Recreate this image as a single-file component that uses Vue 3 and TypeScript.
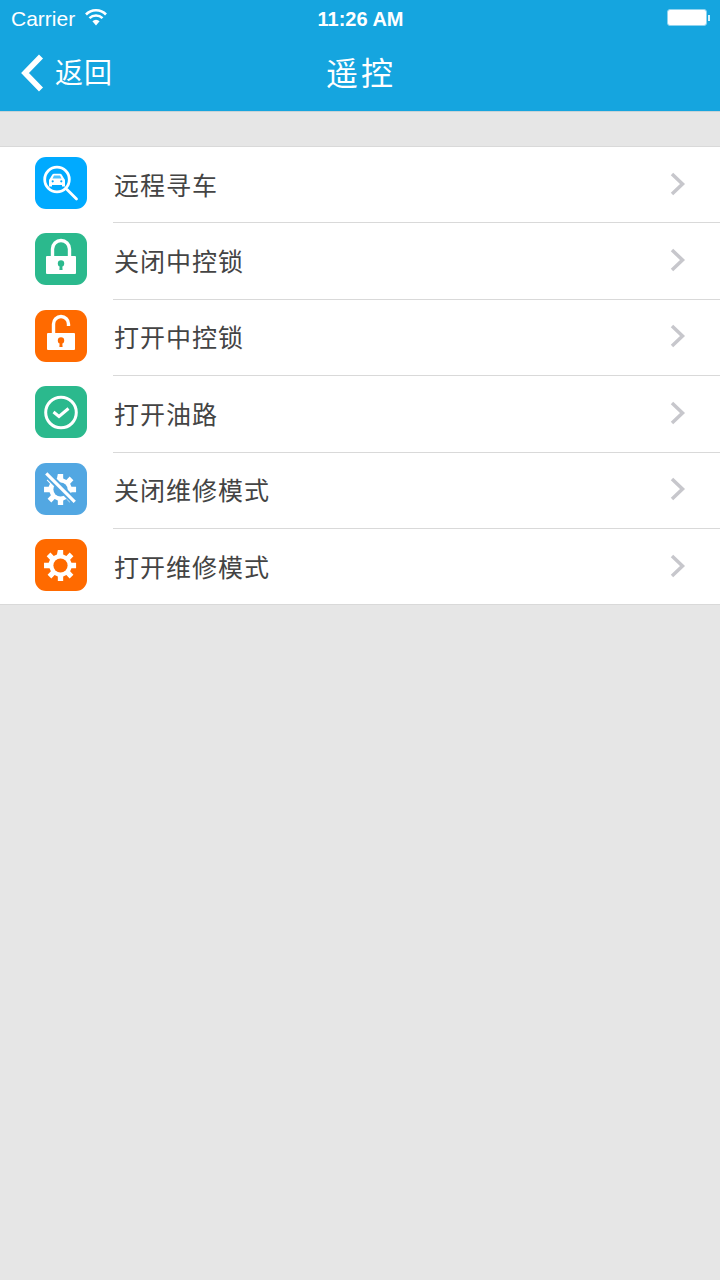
<script setup lang="ts">
interface RemoteItem {
  label: string;
  color: string;
  icon: 'search' | 'lock' | 'unlock' | 'check' | 'gearOff' | 'gear';
}

const items: RemoteItem[] = [
  { label: '远程寻车', color: '#00aaff', icon: 'search' },
  { label: '关闭中控锁', color: '#2bb98d', icon: 'lock' },
  { label: '打开中控锁', color: '#ff6a00', icon: 'unlock' },
  { label: '打开油路', color: '#2bb98d', icon: 'check' },
  { label: '关闭维修模式', color: '#52a7e2', icon: 'gearOff' },
  { label: '打开维修模式', color: '#ff6a00', icon: 'gear' },
];

const gearPath =
  'M23 8.5h6v5.2l3.6 1.5 3.7-3.7 4.2 4.2-3.7 3.7 1.5 3.6h5.2v6h-5.2l-1.5 3.6 3.7 3.7-4.2 4.2-3.7-3.700-3.600 1.500v5.200h-6v-5.200l-3.600-1.500-3.700 3.700-4.200-4.200 3.700-3.700-1.500-3.600H7.500v-6h5.200l1.500-3.600-3.700-3.700 4.200-4.200 3.700 3.700 3.600-1.500z';
</script>

<template>
  <div class="page">
    <header class="top">
      <div class="status">
        <div class="status-left">
          <span class="carrier">Carrier</span>
          <svg class="wifi" width="22" height="17" viewBox="0 0 22 17">
            <path d="M1 5.500a14 14 0 0 1 20 0" fill="none" stroke="#fff" stroke-width="2.600" />
            <path d="M4.500 9.200a9.200 9.200 0 0 1 13 0" fill="none" stroke="#fff" stroke-width="2.600" />
            <path d="M11 16.500L7.400 12.300a5 5 0 0 1 7.200 0z" fill="#fff" />
          </svg>
        </div>
        <span class="time">11:26 AM</span>
        <div class="battery">
          <div class="battery-body"></div>
          <div class="battery-cap"></div>
        </div>
      </div>
      <nav class="nav">
        <div class="back">
          <svg class="back-arrow" width="24" height="38" viewBox="0 0 24 38">
            <path d="M21 2.500L5 19l16 16.500" fill="none" stroke="#fff" stroke-width="5.600" />
          </svg>
          <span class="back-text">返回</span>
        </div>
        <div class="title">遥控</div>
      </nav>
    </header>

    <ul class="list">
      <li v-for="item in items" :key="item.label" class="row">
        <span class="icon" :style="{ background: item.color }">
          <svg width="52" height="52" viewBox="0 0 52 52">
            <template v-if="item.icon === 'search'">
              <circle cx="22" cy="22.500" r="12.300" fill="none" stroke="#fff" stroke-width="2.800" />
              <path d="M32 32.500l9.500 9.500" stroke="#fff" stroke-width="2.800" stroke-linecap="round" />
              <path
                d="M15 21.500l2.200-3.700c.4-.7 1-1 1.700-1h6.200c.7 0 1.300.3 1.700 1l2.200 3.700c.7.500 1 1.200 1 2v6h-3V28H17v1.500h-3v-6c0-.8.300-1.500 1-2z"
                fill="#fff"
              />
              <path d="M17.500 21.500l1.500-3h6l1.500 3z" :fill="item.color" opacity="0.7" />
              <circle cx="17.700" cy="24.300" r="1.100" :fill="item.color" />
              <circle cx="26.300" cy="24.300" r="1.100" :fill="item.color" />
            </template>
            <template v-else-if="item.icon === 'lock'">
              <path d="M17.500 26V16a8.500 8.500 0 0 1 17 0v10" fill="none" stroke="#fff" stroke-width="3.400" />
              <rect x="11" y="23" width="30" height="18" rx="1" fill="#fff" />
              <circle cx="26" cy="30.500" r="3.200" :fill="item.color" />
              <path d="M24.800 31h2.400l.4 6h-3.200z" :fill="item.color" />
            </template>
            <template v-else-if="item.icon === 'unlock'">
              <path d="M18.500 25V14a7.500 7.500 0 0 1 15 0v2" fill="none" stroke="#fff" stroke-width="3.400" />
              <rect x="12" y="23" width="28" height="17" rx="1" fill="#fff" />
              <circle cx="26" cy="30.500" r="3.200" :fill="item.color" />
              <path d="M24.800 31h2.400l.4 6h-3.200z" :fill="item.color" />
            </template>
            <template v-else-if="item.icon === 'check'">
              <circle cx="26" cy="26.500" r="15.300" fill="none" stroke="#fff" stroke-width="3" />
              <path d="M18.500 26l5.500 4.500 9.500-8" fill="none" stroke="#fff" stroke-width="3" />
            </template>
            <g v-else transform="translate(25.500 26.500) scale(0.89) translate(-26 -26)">
              <path :d="gearPath" fill="#fff" />
              <circle cx="26" cy="26" r="8" :fill="item.color" />
              <template v-if="item.icon === 'gearOff'">
                <path d="M9 7l34 34" :stroke="item.color" stroke-width="8" />
                <path d="M10 8l32 32" stroke="#fff" stroke-width="3.600" />
              </template>
            </g>
          </svg>
        </span>
        <div class="row-body">
          <span class="label">{{ item.label }}</span>
          <svg class="chevron" width="16" height="24" viewBox="0 0 16 24">
            <path d="M2 2l10.500 10L2 22" fill="none" stroke="#c7c7cc" stroke-width="3.500" />
          </svg>
        </div>
      </li>
    </ul>
  </div>
</template>

<style scoped>
.page {
  min-height: 1280px;
  background: #e6e6e6;
  font-family: "Liberation Sans", "Noto Sans CJK SC", sans-serif;
}

.top {
  height: 111px;
  background: #15a5df;
  border-bottom: 1px solid #c9d3d6;
  color: #fff;
}

.status {
  height: 38px;
  padding: 0 10px 0 11px;
  display: grid;
  grid-template-columns: 1fr auto 1fr;
  align-items: center;
}

.status-left {
  display: flex;
  align-items: center;
  gap: 10px;
}

.carrier {
  font-size: 21px;
}

.wifi {
  margin-top: -4px;
}

.time {
  font-size: 20px;
  font-weight: 700;
}

.battery {
  display: flex;
  align-items: center;
  justify-content: flex-end;
  gap: 1px;
  margin-top: -3px;
}

.battery-body {
  width: 40px;
  height: 17px;
  box-sizing: border-box;
  background: #fff;
  border: 1px solid #8ed3ef;
  border-radius: 3px;
}

.battery-cap {
  width: 2px;
  height: 6px;
  background: #d5eff9;
}

.nav {
  height: 73px;
  display: grid;
  grid-template-columns: 1fr auto 1fr;
  align-items: center;
}

.back {
  display: flex;
  align-items: center;
  padding-left: 20px;
  gap: 11px;
}

.back-arrow {
  margin-top: -3px;
}

.back-text {
  font-size: 28px;
  letter-spacing: 1px;
  margin-top: -7px;
}

.title {
  font-size: 32px;
  letter-spacing: 3px;
  margin: -8px 0 0 2px;
}

.list {
  list-style: none;
  margin: 34px 0 0;
  padding: 0;
  background: #fff;
  border-top: 1px solid #d9d9d9;
  border-bottom: 1px solid #d9d9d9;
}

.row {
  display: flex;
  align-items: flex-start;
  padding-left: 35px;
  gap: 26px;
  height: 76.4px;
}

.row:last-child {
  height: 75px;
}

.icon {
  width: 52px;
  height: 52px;
  margin-top: 10px;
  border-radius: 11px;
  flex: none;
  display: block;
}

.icon svg {
  display: block;
}

.row-body {
  flex: 1;
  height: 76.4px;
  box-sizing: border-box;
  display: flex;
  align-items: center;
  justify-content: space-between;
  padding-right: 34px;
  border-bottom: 1px solid #d9d9d9;
}

.row:last-child .row-body {
  border-bottom: none;
}

.label {
  font-size: 25px;
  letter-spacing: 1px;
  color: #444;
  margin: -2px 0 0 1px;
}

.chevron {
  margin-top: -2px;
}
</style>
